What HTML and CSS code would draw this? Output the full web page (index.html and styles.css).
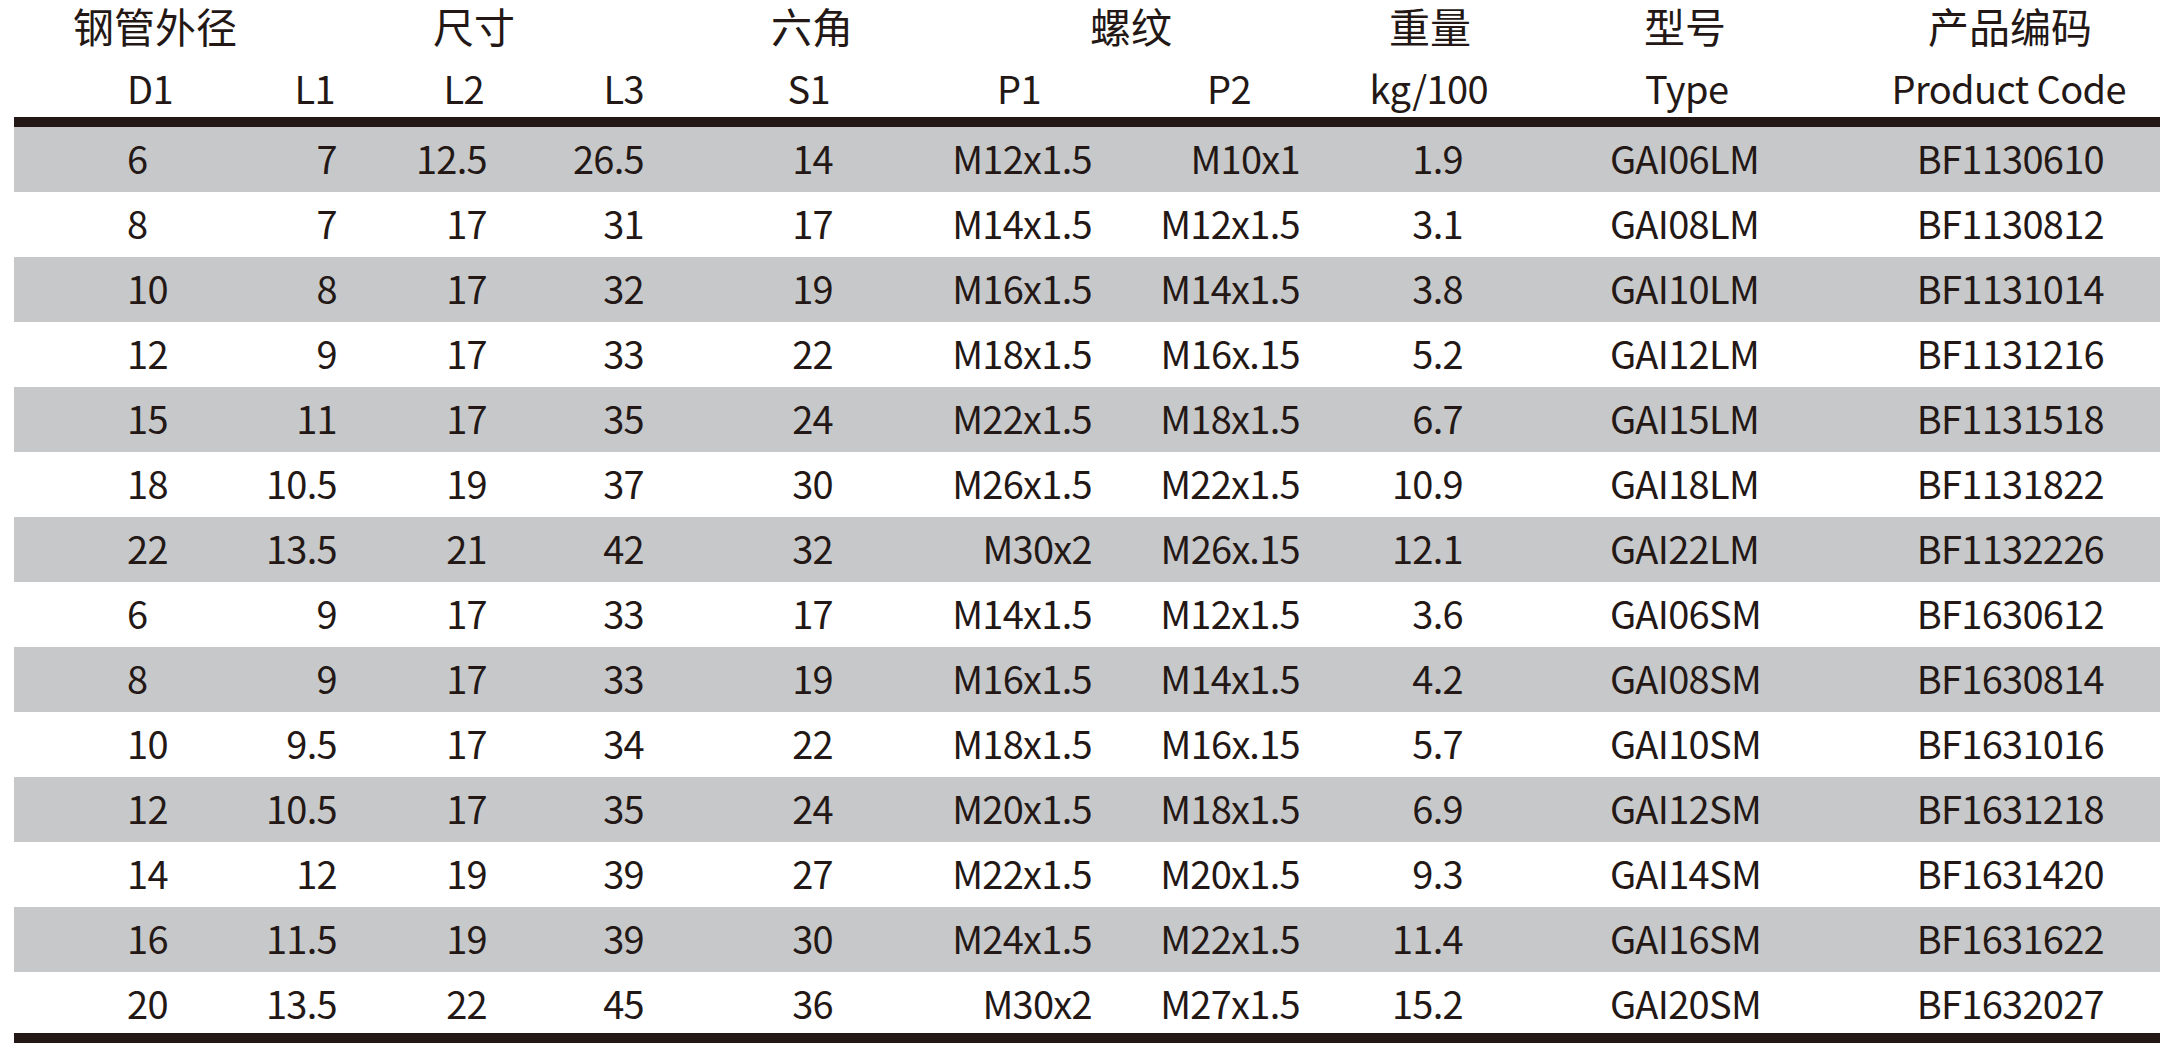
FILE: index.html
```html
<!DOCTYPE html>
<html lang="zh">
<head>
<meta charset="utf-8">
<title>钢管外径 规格表</title>
<link rel="stylesheet" href="styles.css">
</head>
<body>
<div class="sheet">
  <div class="head1">
    <div>钢管外径</div>
    <div>尺寸</div>
    <div>六角</div>
    <div>螺纹</div>
    <div>重量</div>
    <div>型号</div>
    <div></div>
    <div>产品编码</div>
  </div>
  <div class="cols head2">
    <div class="c1">D1</div>
    <div class="h-l1">L1</div>
    <div class="h-l2">L2</div>
    <div>L3</div>
    <div class="h-s1">S1</div>
    <div class="h-p1">P1</div>
    <div class="h-p2">P2</div>
    <div class="h-kg">kg/100</div>
    <div class="h-type">Type</div>
    <div class="h-code">Product Code</div>
  </div>
  <div class="rule"></div>
  <div class="body" id="body"></div>
  <div class="rule"></div>
</div>
<script src="app.js"></script>
</body>
</html>
```
FILE: app.js
```js
const data = [
["6","7","12.5","26.5","14","M12x1.5","M10x1","1.9","GAI06LM","BF1130610"],
["8","7","17","31","17","M14x1.5","M12x1.5","3.1","GAI08LM","BF1130812"],
["10","8","17","32","19","M16x1.5","M14x1.5","3.8","GAI10LM","BF1131014"],
["12","9","17","33","22","M18x1.5","M16x.15","5.2","GAI12LM","BF1131216"],
["15","11","17","35","24","M22x1.5","M18x1.5","6.7","GAI15LM","BF1131518"],
["18","10.5","19","37","30","M26x1.5","M22x1.5","10.9","GAI18LM","BF1131822"],
["22","13.5","21","42","32","M30x2","M26x.15","12.1","GAI22LM","BF1132226"],
["6","9","17","33","17","M14x1.5","M12x1.5","3.6","GAI06SM","BF1630612"],
["8","9","17","33","19","M16x1.5","M14x1.5","4.2","GAI08SM","BF1630814"],
["10","9.5","17","34","22","M18x1.5","M16x.15","5.7","GAI10SM","BF1631016"],
["12","10.5","17","35","24","M20x1.5","M18x1.5","6.9","GAI12SM","BF1631218"],
["14","12","19","39","27","M22x1.5","M20x1.5","9.3","GAI14SM","BF1631420"],
["16","11.5","19","39","30","M24x1.5","M22x1.5","11.4","GAI16SM","BF1631622"],
["20","13.5","22","45","36","M30x2","M27x1.5","15.2","GAI20SM","BF1632027"]
];
const body = document.getElementById("body");
data.forEach((r) => {
  const row = document.createElement("div");
  row.className = "cols row";
  r.forEach((v, i) => {
    const c = document.createElement("div");
    c.className = "c" + (i + 1);
    c.textContent = v;
    row.appendChild(c);
  });
  body.appendChild(row);
});
```
FILE: styles.css
```css
html, body {
  margin: 0;
  padding: 0;
  background: #ffffff;
}
body {
  font-family: "Noto Sans CJK SC", "Noto Sans", sans-serif;
  color: #231815;
  font-size: 38px;
}
.sheet {
  width: 2146px;
  margin-left: 14px;
}
.head1 {
  display: grid;
  grid-template-columns: 282px 356px 320px 318px 280px 230px 60px 300px;
  height: 50px;
  line-height: 50px;
  text-align: center;
  font-size: 41px;
}
.cols {
  display: grid;
  grid-template-columns: 226px 97px 150px 157px 189px 259px 208px 163px 337px 360px;
  text-align: right;
  white-space: nowrap;
  letter-spacing: -0.7px;
}
.head2 {
  height: 59px;
  padding-top: 8px;
  line-height: 59px;
  letter-spacing: -0.6px;
}
.rule {
  height: 10px;
  background: #231815;
}
.row {
  height: 65px;
  line-height: 62.5px;
}
.row:nth-child(odd) {
  background: #c7c8ca;
}
.row:last-child {
  height: 61px;
}
.c1 { text-align: left; padding-left: 113px; }
.c9 { text-align: left; padding-left: 147px; }
.c10 { padding-right: 56px; }
.h-l1 { padding-right: 2px; }
.h-l2 { padding-right: 3px; }
.h-s1 { padding-right: 3px; }
.h-p1 { padding-right: 51px; }
.h-p2 { padding-right: 49px; }
.h-kg { margin-right: -25px; }
.h-type { text-align: left; padding-left: 182px; }
.h-code { padding-right: 34px; }
```
